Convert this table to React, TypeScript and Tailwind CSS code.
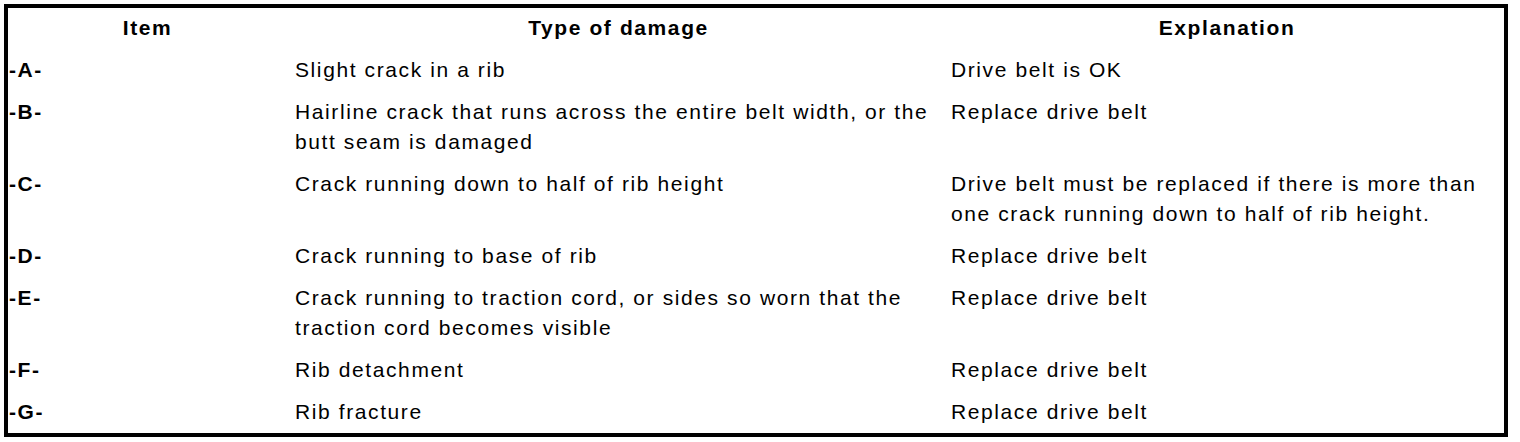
const rows = [
  { item: "-A-", damage: "Slight crack in a rib", explanation: "Drive belt is OK" },
  {
    item: "-B-",
    damage: "Hairline crack that runs across the entire belt width, or the butt seam is damaged",
    explanation: "Replace drive belt",
  },
  {
    item: "-C-",
    damage: "Crack running down to half of rib height",
    explanation: "Drive belt must be replaced if there is more than one crack running down to half of rib height.",
  },
  { item: "-D-", damage: "Crack running to base of rib", explanation: "Replace drive belt" },
  {
    item: "-E-",
    damage: "Crack running to traction cord, or sides so worn that the traction cord becomes visible",
    explanation: "Replace drive belt",
  },
  { item: "-F-", damage: "Rib detachment", explanation: "Replace drive belt" },
  { item: "-G-", damage: "Rib fracture", explanation: "Replace drive belt" },
];

export default function App() {
  return (
    <div className="h-[442px] w-[1520px] bg-white p-[4px] font-['Liberation_Sans',Arial,sans-serif] text-[21px] leading-[30px] tracking-[1.6px] text-black">
      <div className="w-[1504px] border-[4px] border-black">
        {/* Header */}
        <div className="grid grid-cols-[279px_663px_1fr] pt-[5px] pb-[6px] font-bold">
          <div className="text-center">Item</div>
          <div className="text-center">Type of damage</div>
          <div className="text-center">Explanation</div>
        </div>

        {/* Rows */}
        {rows.map((r) => (
          <div key={r.item} className="grid grid-cols-[279px_663px_1fr] py-[6px]">
            <div className="pl-px font-bold">{r.item}</div>
            <div className="pl-[8px] pr-[8px]">{r.damage}</div>
            <div className="pl-px pr-[10px]">{r.explanation}</div>
          </div>
        ))}
      </div>
    </div>
  );
}
